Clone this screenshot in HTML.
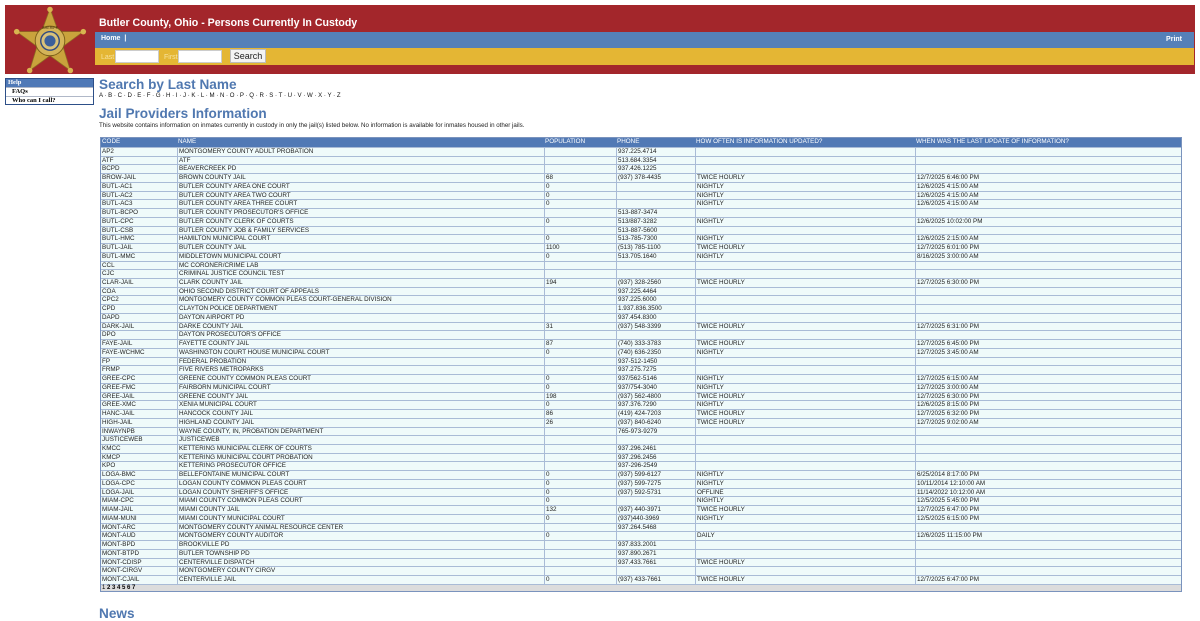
<!DOCTYPE html>
<html><head><meta charset="utf-8"><style>
*{margin:0;padding:0;box-sizing:border-box}
body{width:1200px;height:620px;background:#fff;font-family:"Liberation Sans",Arial,sans-serif;position:relative;overflow:hidden}
.hdr{position:absolute;left:5px;top:5px;width:1190px;height:69px;background:#a3262b}
.title{position:absolute;left:99px;top:17px;color:#fff;font-weight:bold;font-size:10.6px}
.blue{position:absolute;left:95px;top:32px;width:1099px;height:16px;background:#5580b8;color:#fff;font-size:7px;font-weight:bold}
.yel{position:absolute;left:95px;top:48px;width:1099px;height:17px;background:#e4b634;font-size:7px;color:#f7e3a0}
.yel input{position:absolute;top:2px;height:13px;border:1px solid #ccc;background:#fff}
.btn{position:absolute;left:135px;top:1px;width:36px;height:14px;background:#f3f3f3;border:1px solid #bbb;font-size:9px;color:#222;text-align:center;line-height:12px}
.side{position:absolute;left:5px;top:78px;width:89px;border:1px solid #2d4f88;font-family:"Liberation Serif",serif;font-size:6.5px;font-weight:bold}
.side div{height:8.3px;line-height:8px;border-top:1px solid #b0b8c8;background:#fff;padding-left:6px}
.side div.h{background:#4f79b7;color:#fff;border:0;padding-left:2px}
h1{position:absolute;left:99px;font-size:13.6px;color:#5078b0;font-weight:bold}
.letters{position:absolute;left:99px;top:92px;font-size:6.1px;color:#111}
.intro{position:absolute;left:99px;top:122px;font-size:6.2px;color:#222}
.tbl{position:absolute;left:100px;top:137px;width:1082px;border:1px solid #7a93bd}
.r{display:flex;height:8.74px;border-top:1px solid #a9bbd6;background:#effafa;font-size:6.3px;color:#222}
.r span{border-left:1px solid #a9bbd6;padding-left:1px;white-space:nowrap;height:100%;line-height:8px;overflow:visible}
.r span:first-child{border-left:0}
.hd{background:#5179b5;color:#fff;height:9px;border-top:0}
.hd span{border-left:0;line-height:8px}
.c1{width:76px}.c2{width:367px}.c3{width:72px}.c4{width:79px}.c5{width:220px}.c6{flex:1}
.pg{height:7.5px;background:#dcdcdc;border-top:1px solid #a9bbd6;font-size:6px;font-weight:bold;line-height:7px;padding-left:1px}
</style></head><body>
<div class="hdr"></div>
<svg style="position:absolute;left:13px;top:4px" width="74" height="72" viewBox="0 0 80 74">
<g fill="#c9a33c" stroke="#8d6f22" stroke-width="0.8">
<polygon points="40,3 49,28 76,28 54,44 62,70 40,54 18,70 26,44 4,28 31,28"/>
</g>
<g fill="#d8b450"><circle cx="40" cy="4" r="3"/><circle cx="76" cy="28" r="3"/><circle cx="62" cy="70" r="3"/><circle cx="18" cy="70" r="3"/><circle cx="4" cy="28" r="3"/></g>
<circle cx="40" cy="38" r="16" fill="#d4b458" stroke="#7a5d18" stroke-width="1"/>
<circle cx="40" cy="38" r="10" fill="#d9c27a" stroke="#2f4a80" stroke-width="1.5"/>
<circle cx="40" cy="38" r="6" fill="#3b5f9a"/>
<text x="40" y="25" font-size="4" text-anchor="middle" fill="#3a2a08" font-family="Liberation Sans">SHERIFF</text>
</svg>
<div class="title">Butler County, Ohio - Persons Currently In Custody</div>
<div class="blue"><span style="position:absolute;left:6px;top:3px">Home &nbsp;|</span><span style="position:absolute;right:12px;top:4px">Print</span></div>
<div class="yel"><span style="position:absolute;left:6px;top:6px">Last</span><input style="left:20px;width:44px"><span style="position:absolute;left:69px;top:6px">First</span><input style="left:83px;width:44px"><div class="btn">Search</div></div>
<div class="side"><div class="h">Help</div><div>FAQs</div><div>Who can I call?</div></div>
<h1 style="top:77px">Search by Last Name</h1>
<div class="letters">A · B · C · D · E · F · G · H · I · J · K · L · M · N · O · P · Q · R · S · T · U · V · W · X · Y · Z</div>
<h1 style="top:106px">Jail Providers Information</h1>
<div class="intro">This website contains information on inmates currently in custody in only the jail(s) listed below. No information is available for inmates housed in other jails.</div>
<div class="tbl">
<div class="r hd"><span class="c1">CODE</span><span class="c2">NAME</span><span class="c3">POPULATION</span><span class="c4">PHONE</span><span class="c5">HOW OFTEN IS INFORMATION UPDATED?</span><span class="c6">WHEN WAS THE LAST UPDATE OF INFORMATION?</span></div>
<div class="r"><span class="c1">AP2</span><span class="c2">MONTGOMERY COUNTY ADULT PROBATION</span><span class="c3"></span><span class="c4">937.225.4714</span><span class="c5"></span><span class="c6"></span></div>
<div class="r"><span class="c1">ATF</span><span class="c2">ATF</span><span class="c3"></span><span class="c4">513.684.3354</span><span class="c5"></span><span class="c6"></span></div>
<div class="r"><span class="c1">BCPD</span><span class="c2">BEAVERCREEK PD</span><span class="c3"></span><span class="c4">937.426.1225</span><span class="c5"></span><span class="c6"></span></div>
<div class="r"><span class="c1">BROW-JAIL</span><span class="c2">BROWN COUNTY JAIL</span><span class="c3">68</span><span class="c4">(937) 378-4435</span><span class="c5">TWICE HOURLY</span><span class="c6">12/7/2025 6:46:00 PM</span></div>
<div class="r"><span class="c1">BUTL-AC1</span><span class="c2">BUTLER COUNTY AREA ONE COURT</span><span class="c3">0</span><span class="c4"></span><span class="c5">NIGHTLY</span><span class="c6">12/6/2025 4:15:00 AM</span></div>
<div class="r"><span class="c1">BUTL-AC2</span><span class="c2">BUTLER COUNTY AREA TWO COURT</span><span class="c3">0</span><span class="c4"></span><span class="c5">NIGHTLY</span><span class="c6">12/6/2025 4:15:00 AM</span></div>
<div class="r"><span class="c1">BUTL-AC3</span><span class="c2">BUTLER COUNTY AREA THREE COURT</span><span class="c3">0</span><span class="c4"></span><span class="c5">NIGHTLY</span><span class="c6">12/6/2025 4:15:00 AM</span></div>
<div class="r"><span class="c1">BUTL-BCPO</span><span class="c2">BUTLER COUNTY PROSECUTOR'S OFFICE</span><span class="c3"></span><span class="c4">513-887-3474</span><span class="c5"></span><span class="c6"></span></div>
<div class="r"><span class="c1">BUTL-CPC</span><span class="c2">BUTLER COUNTY CLERK OF COURTS</span><span class="c3">0</span><span class="c4">513/887-3282</span><span class="c5">NIGHTLY</span><span class="c6">12/6/2025 10:02:00 PM</span></div>
<div class="r"><span class="c1">BUTL-CSB</span><span class="c2">BUTLER COUNTY JOB &amp; FAMILY SERVICES</span><span class="c3"></span><span class="c4">513-887-5600</span><span class="c5"></span><span class="c6"></span></div>
<div class="r"><span class="c1">BUTL-HMC</span><span class="c2">HAMILTON MUNICIPAL COURT</span><span class="c3">0</span><span class="c4">513-785-7300</span><span class="c5">NIGHTLY</span><span class="c6">12/6/2025 2:15:00 AM</span></div>
<div class="r"><span class="c1">BUTL-JAIL</span><span class="c2">BUTLER COUNTY JAIL</span><span class="c3">1100</span><span class="c4">(513) 785-1100</span><span class="c5">TWICE HOURLY</span><span class="c6">12/7/2025 6:01:00 PM</span></div>
<div class="r"><span class="c1">BUTL-MMC</span><span class="c2">MIDDLETOWN MUNICIPAL COURT</span><span class="c3">0</span><span class="c4">513.705.1640</span><span class="c5">NIGHTLY</span><span class="c6">8/16/2025 3:00:00 AM</span></div>
<div class="r"><span class="c1">CCL</span><span class="c2">MC CORONER/CRIME LAB</span><span class="c3"></span><span class="c4"></span><span class="c5"></span><span class="c6"></span></div>
<div class="r"><span class="c1">CJC</span><span class="c2">CRIMINAL JUSTICE COUNCIL TEST</span><span class="c3"></span><span class="c4"></span><span class="c5"></span><span class="c6"></span></div>
<div class="r"><span class="c1">CLAR-JAIL</span><span class="c2">CLARK COUNTY JAIL</span><span class="c3">194</span><span class="c4">(937) 328-2560</span><span class="c5">TWICE HOURLY</span><span class="c6">12/7/2025 6:30:00 PM</span></div>
<div class="r"><span class="c1">COA</span><span class="c2">OHIO SECOND DISTRICT COURT OF APPEALS</span><span class="c3"></span><span class="c4">937.225.4464</span><span class="c5"></span><span class="c6"></span></div>
<div class="r"><span class="c1">CPC2</span><span class="c2">MONTGOMERY COUNTY COMMON PLEAS COURT-GENERAL DIVISION</span><span class="c3"></span><span class="c4">937.225.6000</span><span class="c5"></span><span class="c6"></span></div>
<div class="r"><span class="c1">CPD</span><span class="c2">CLAYTON POLICE DEPARTMENT</span><span class="c3"></span><span class="c4">1.937.836.3500</span><span class="c5"></span><span class="c6"></span></div>
<div class="r"><span class="c1">DAPD</span><span class="c2">DAYTON AIRPORT PD</span><span class="c3"></span><span class="c4">937.454.8300</span><span class="c5"></span><span class="c6"></span></div>
<div class="r"><span class="c1">DARK-JAIL</span><span class="c2">DARKE COUNTY JAIL</span><span class="c3">31</span><span class="c4">(937) 548-3399</span><span class="c5">TWICE HOURLY</span><span class="c6">12/7/2025 6:31:00 PM</span></div>
<div class="r"><span class="c1">DPO</span><span class="c2">DAYTON PROSECUTOR'S OFFICE</span><span class="c3"></span><span class="c4"></span><span class="c5"></span><span class="c6"></span></div>
<div class="r"><span class="c1">FAYE-JAIL</span><span class="c2">FAYETTE COUNTY JAIL</span><span class="c3">87</span><span class="c4">(740) 333-3783</span><span class="c5">TWICE HOURLY</span><span class="c6">12/7/2025 6:45:00 PM</span></div>
<div class="r"><span class="c1">FAYE-WCHMC</span><span class="c2">WASHINGTON COURT HOUSE MUNICIPAL COURT</span><span class="c3">0</span><span class="c4">(740) 636-2350</span><span class="c5">NIGHTLY</span><span class="c6">12/7/2025 3:45:00 AM</span></div>
<div class="r"><span class="c1">FP</span><span class="c2">FEDERAL PROBATION</span><span class="c3"></span><span class="c4">937-512-1450</span><span class="c5"></span><span class="c6"></span></div>
<div class="r"><span class="c1">FRMP</span><span class="c2">FIVE RIVERS METROPARKS</span><span class="c3"></span><span class="c4">937.275.7275</span><span class="c5"></span><span class="c6"></span></div>
<div class="r"><span class="c1">GREE-CPC</span><span class="c2">GREENE COUNTY COMMON PLEAS COURT</span><span class="c3">0</span><span class="c4">937/562-5146</span><span class="c5">NIGHTLY</span><span class="c6">12/7/2025 6:15:00 AM</span></div>
<div class="r"><span class="c1">GREE-FMC</span><span class="c2">FAIRBORN MUNICIPAL COURT</span><span class="c3">0</span><span class="c4">937/754-3040</span><span class="c5">NIGHTLY</span><span class="c6">12/7/2025 3:00:00 AM</span></div>
<div class="r"><span class="c1">GREE-JAIL</span><span class="c2">GREENE COUNTY JAIL</span><span class="c3">198</span><span class="c4">(937) 562-4800</span><span class="c5">TWICE HOURLY</span><span class="c6">12/7/2025 6:30:00 PM</span></div>
<div class="r"><span class="c1">GREE-XMC</span><span class="c2">XENIA MUNICIPAL COURT</span><span class="c3">0</span><span class="c4">937.376.7290</span><span class="c5">NIGHTLY</span><span class="c6">12/6/2025 8:15:00 PM</span></div>
<div class="r"><span class="c1">HANC-JAIL</span><span class="c2">HANCOCK COUNTY JAIL</span><span class="c3">86</span><span class="c4">(419) 424-7203</span><span class="c5">TWICE HOURLY</span><span class="c6">12/7/2025 6:32:00 PM</span></div>
<div class="r"><span class="c1">HIGH-JAIL</span><span class="c2">HIGHLAND COUNTY JAIL</span><span class="c3">26</span><span class="c4">(937) 840-6240</span><span class="c5">TWICE HOURLY</span><span class="c6">12/7/2025 9:02:00 AM</span></div>
<div class="r"><span class="c1">INWAYNPB</span><span class="c2">WAYNE COUNTY, IN, PROBATION DEPARTMENT</span><span class="c3"></span><span class="c4">765-973-9279</span><span class="c5"></span><span class="c6"></span></div>
<div class="r"><span class="c1">JUSTICEWEB</span><span class="c2">JUSTICEWEB</span><span class="c3"></span><span class="c4"></span><span class="c5"></span><span class="c6"></span></div>
<div class="r"><span class="c1">KMCC</span><span class="c2">KETTERING MUNICIPAL CLERK OF COURTS</span><span class="c3"></span><span class="c4">937.296.2461</span><span class="c5"></span><span class="c6"></span></div>
<div class="r"><span class="c1">KMCP</span><span class="c2">KETTERING MUNICIPAL COURT PROBATION</span><span class="c3"></span><span class="c4">937.296.2456</span><span class="c5"></span><span class="c6"></span></div>
<div class="r"><span class="c1">KPO</span><span class="c2">KETTERING PROSECUTOR OFFICE</span><span class="c3"></span><span class="c4">937-296-2549</span><span class="c5"></span><span class="c6"></span></div>
<div class="r"><span class="c1">LOGA-BMC</span><span class="c2">BELLEFONTAINE MUNICIPAL COURT</span><span class="c3">0</span><span class="c4">(937) 599-6127</span><span class="c5">NIGHTLY</span><span class="c6">6/25/2014 8:17:00 PM</span></div>
<div class="r"><span class="c1">LOGA-CPC</span><span class="c2">LOGAN COUNTY COMMON PLEAS COURT</span><span class="c3">0</span><span class="c4">(937) 599-7275</span><span class="c5">NIGHTLY</span><span class="c6">10/11/2014 12:10:00 AM</span></div>
<div class="r"><span class="c1">LOGA-JAIL</span><span class="c2">LOGAN COUNTY SHERIFF'S OFFICE</span><span class="c3">0</span><span class="c4">(937) 592-5731</span><span class="c5">OFFLINE</span><span class="c6">11/14/2022 10:12:00 AM</span></div>
<div class="r"><span class="c1">MIAM-CPC</span><span class="c2">MIAMI COUNTY COMMON PLEAS COURT</span><span class="c3">0</span><span class="c4"></span><span class="c5">NIGHTLY</span><span class="c6">12/5/2025 5:45:00 PM</span></div>
<div class="r"><span class="c1">MIAM-JAIL</span><span class="c2">MIAMI COUNTY JAIL</span><span class="c3">132</span><span class="c4">(937) 440-3971</span><span class="c5">TWICE HOURLY</span><span class="c6">12/7/2025 6:47:00 PM</span></div>
<div class="r"><span class="c1">MIAM-MUNI</span><span class="c2">MIAMI COUNTY MUNICIPAL COURT</span><span class="c3">0</span><span class="c4">(937)440-3969</span><span class="c5">NIGHTLY</span><span class="c6">12/5/2025 6:15:00 PM</span></div>
<div class="r"><span class="c1">MONT-ARC</span><span class="c2">MONTGOMERY COUNTY ANIMAL RESOURCE CENTER</span><span class="c3"></span><span class="c4">937.264.5468</span><span class="c5"></span><span class="c6"></span></div>
<div class="r"><span class="c1">MONT-AUD</span><span class="c2">MONTGOMERY COUNTY AUDITOR</span><span class="c3">0</span><span class="c4"></span><span class="c5">DAILY</span><span class="c6">12/6/2025 11:15:00 PM</span></div>
<div class="r"><span class="c1">MONT-BPD</span><span class="c2">BROOKVILLE PD</span><span class="c3"></span><span class="c4">937.833.2001</span><span class="c5"></span><span class="c6"></span></div>
<div class="r"><span class="c1">MONT-BTPD</span><span class="c2">BUTLER TOWNSHIP PD</span><span class="c3"></span><span class="c4">937.890.2671</span><span class="c5"></span><span class="c6"></span></div>
<div class="r"><span class="c1">MONT-CDISP</span><span class="c2">CENTERVILLE DISPATCH</span><span class="c3"></span><span class="c4">937.433.7661</span><span class="c5">TWICE HOURLY</span><span class="c6"></span></div>
<div class="r"><span class="c1">MONT-CIRGV</span><span class="c2">MONTGOMERY COUNTY CIRGV</span><span class="c3"></span><span class="c4"></span><span class="c5"></span><span class="c6"></span></div>
<div class="r"><span class="c1">MONT-CJAIL</span><span class="c2">CENTERVILLE JAIL</span><span class="c3">0</span><span class="c4">(937) 433-7661</span><span class="c5">TWICE HOURLY</span><span class="c6">12/7/2025 6:47:00 PM</span></div>
<div class="pg"><span style="font-weight:normal">1</span> 2 3 4 5 6 7</div>
</div>
<h1 style="top:606px">News</h1>
</body></html>
